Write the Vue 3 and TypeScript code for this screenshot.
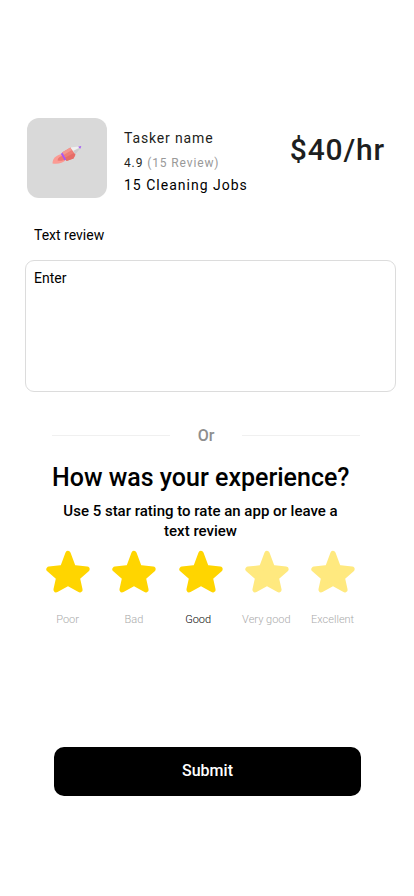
<script setup lang="ts">
import { ref } from 'vue'

const labels: string[] = ['Poor', 'Bad', 'Good', 'Very good', 'Excellent']
const rating = ref<number>(3)
const review = ref<string>('')
</script>

<template>
  <main class="screen">
    <header class="tasker">
      <div class="avatar">
        <svg class="rocket" viewBox="0 0 32 22" aria-hidden="true">
          <path d="M1.500 19.500C1.500 14.500 5 11 11 10L15 15.500C12 19.500 6 20.500 1.500 19.500Z" fill="#fb9b94" />
          <path d="M6.500 16.500C7 13.500 9 12 12 12L14.500 15.500C11.500 17 9 17 6.500 16.500Z" fill="#ee7771" />
          <path d="M11 8.500L19.500 3.500L24.500 10.500L22.500 14.500L15.500 17Z" fill="#ee7d76" />
          <path d="M11 8.500L19.500 3.500L21 6L12.700 11Z" fill="#f4978f" />
          <path d="M14 13.800L23.500 8.800L24.500 10.500L22.500 14.500L15.500 17Z" fill="#e66d68" />
          <path d="M19.500 3.500L28 2.500L29.500 4.500L24.500 10.500Z" fill="#f0f0f0" />
          <path d="M22 7L29 3.500L29.500 4.500L24.500 10.500Z" fill="#cbcbcd" />
          <path d="M27 2.700L30.300 2L29.300 4.800Z" fill="#a45bf5" />
          <path d="M9.800 9.800L11.500 8.800L15.200 15.600L13.700 16.500Z" fill="#a855f7" />
        </svg>
      </div>
      <div class="details">
        <div class="name">Tasker name</div>
        <div class="score">4.9 <span>(15 Review)</span></div>
        <div class="jobs">15 Cleaning Jobs</div>
      </div>
      <div class="price">$40/hr</div>
    </header>

    <label class="review-label" for="review">Text review</label>
    <textarea id="review" v-model="review" class="review" placeholder="Enter"></textarea>

    <div class="divider"><span>Or</span></div>

    <h1>How was your experience?</h1>
    <p class="hint">Use 5 star rating to rate an app or leave a text review</p>

    <div class="stars">
      <button
        v-for="(label, i) in labels"
        :key="label"
        class="rate"
        :class="{ filled: i < rating, current: i === rating - 1 }"
        @click="rating = i + 1"
      >
        <svg class="star" viewBox="0 0 44 43" aria-hidden="true">
          <path d="M22 2.700L27.200 16.800L40.900 18.300L31.200 26.800L33.800 38.700L22 32.200L10.200 38.700L12.800 26.800L3.100 18.300L16.800 16.800Z" />
        </svg>
        <span class="caption">{{ label }}</span>
      </button>
    </div>

    <button class="submit">Submit</button>
  </main>
</template>

<style>
body {
  background: #fff;
}
</style>

<style scoped>
.screen {
  box-sizing: border-box;
  width: 414px;
  height: 896px;
  padding-top: 118px;
  display: flex;
  flex-direction: column;
  background: #fff;
  color: #000;
  font-family: Roboto, sans-serif;
  overflow: hidden;
}

.tasker {
  display: flex;
  height: 80px;
  padding: 0 29px 0 27px;
}

.avatar {
  width: 80px;
  height: 80px;
  border-radius: 12px;
  background: #d9d9d9;
  display: flex;
  align-items: center;
  justify-content: center;
}

.rocket {
  width: 32px;
  height: 22px;
  margin-bottom: 6px;
}

.details {
  margin-left: 17px;
  padding-top: 10px;
  white-space: nowrap;
}

.name {
  font-size: 14px;
  line-height: 20px;
  letter-spacing: 0.850px;
  color: #1d1e20;
}

.score {
  margin-top: 7px;
  font-size: 12px;
  line-height: 16px;
  letter-spacing: 0.880px;
  color: #1d1e20;
}

.score span {
  color: #999;
}

.jobs {
  margin-top: 4px;
  font-size: 14px;
  line-height: 20px;
  letter-spacing: 1px;
}

.price {
  margin-left: auto;
  padding-top: 14px;
  font-size: 30px;
  font-weight: 500;
  line-height: 36px;
  letter-spacing: 0.850px;
  color: #1d1e20;
}

.review-label {
  margin: 27px 0 0 34px;
  font-size: 14px;
  line-height: 20px;
}

.review {
  box-sizing: border-box;
  width: 371px;
  height: 132px;
  margin: 15px 0 0 25px;
  padding: 7px 8px;
  border: 1px solid #dcdcdc;
  border-radius: 9px;
  background: #fff;
  font: 14px/20px Roboto, sans-serif;
  color: #000;
  resize: none;
  outline: none;
}

.review::placeholder {
  color: #000;
  opacity: 1;
}

.divider {
  display: flex;
  align-items: center;
  width: 308px;
  height: 19px;
  margin: 34px 0 0 52px;
  font-size: 16px;
  font-weight: 500;
  line-height: 20px;
  color: #8e8e8e;
}

.divider::before,
.divider::after {
  content: '';
  width: 118px;
  height: 1px;
  background: #f0f0f0;
}

.divider span {
  flex: 1;
  height: 19px;
  text-align: center;
}

h1 {
  width: 298px;
  margin: 17px 0 0 52px;
  font-size: 25px;
  font-weight: 500;
  line-height: 32px;
  white-space: nowrap;
}

.hint {
  width: 290px;
  margin: 7px 0 0 55.500px;
  font-size: 15px;
  font-weight: 500;
  line-height: 20px;
  text-align: center;
}

.stars {
  display: grid;
  grid-template-columns: repeat(5, 66.250px);
  margin: 10px 0 0 35px;
}

.rate {
  display: flex;
  flex-direction: column;
  align-items: center;
  padding: 0;
  border: 0;
  background: none;
  font-family: inherit;
  cursor: pointer;
}

.star {
  width: 44px;
  height: 43px;
  fill: #ffe97f;
  stroke: #ffe97f;
  stroke-width: 5.500;
  stroke-linejoin: round;
  overflow: visible;
}

.filled .star {
  fill: #ffd500;
  stroke: #ffd500;
}

.caption {
  margin-top: 18px;
  padding-right: 1px;
  font-size: 11px;
  font-weight: 300;
  line-height: 16px;
  color: #aaa;
  white-space: nowrap;
}

.current .caption {
  padding-right: 5px;
  color: #000;
}

.submit {
  width: 307px;
  height: 49px;
  margin: 119px 0 0 54px;
  padding: 0 0 2px;
  border: 0;
  border-radius: 10px;
  background: #000;
  color: #fff;
  font: 500 16px/20px Roboto, sans-serif;
  cursor: pointer;
}
</style>
